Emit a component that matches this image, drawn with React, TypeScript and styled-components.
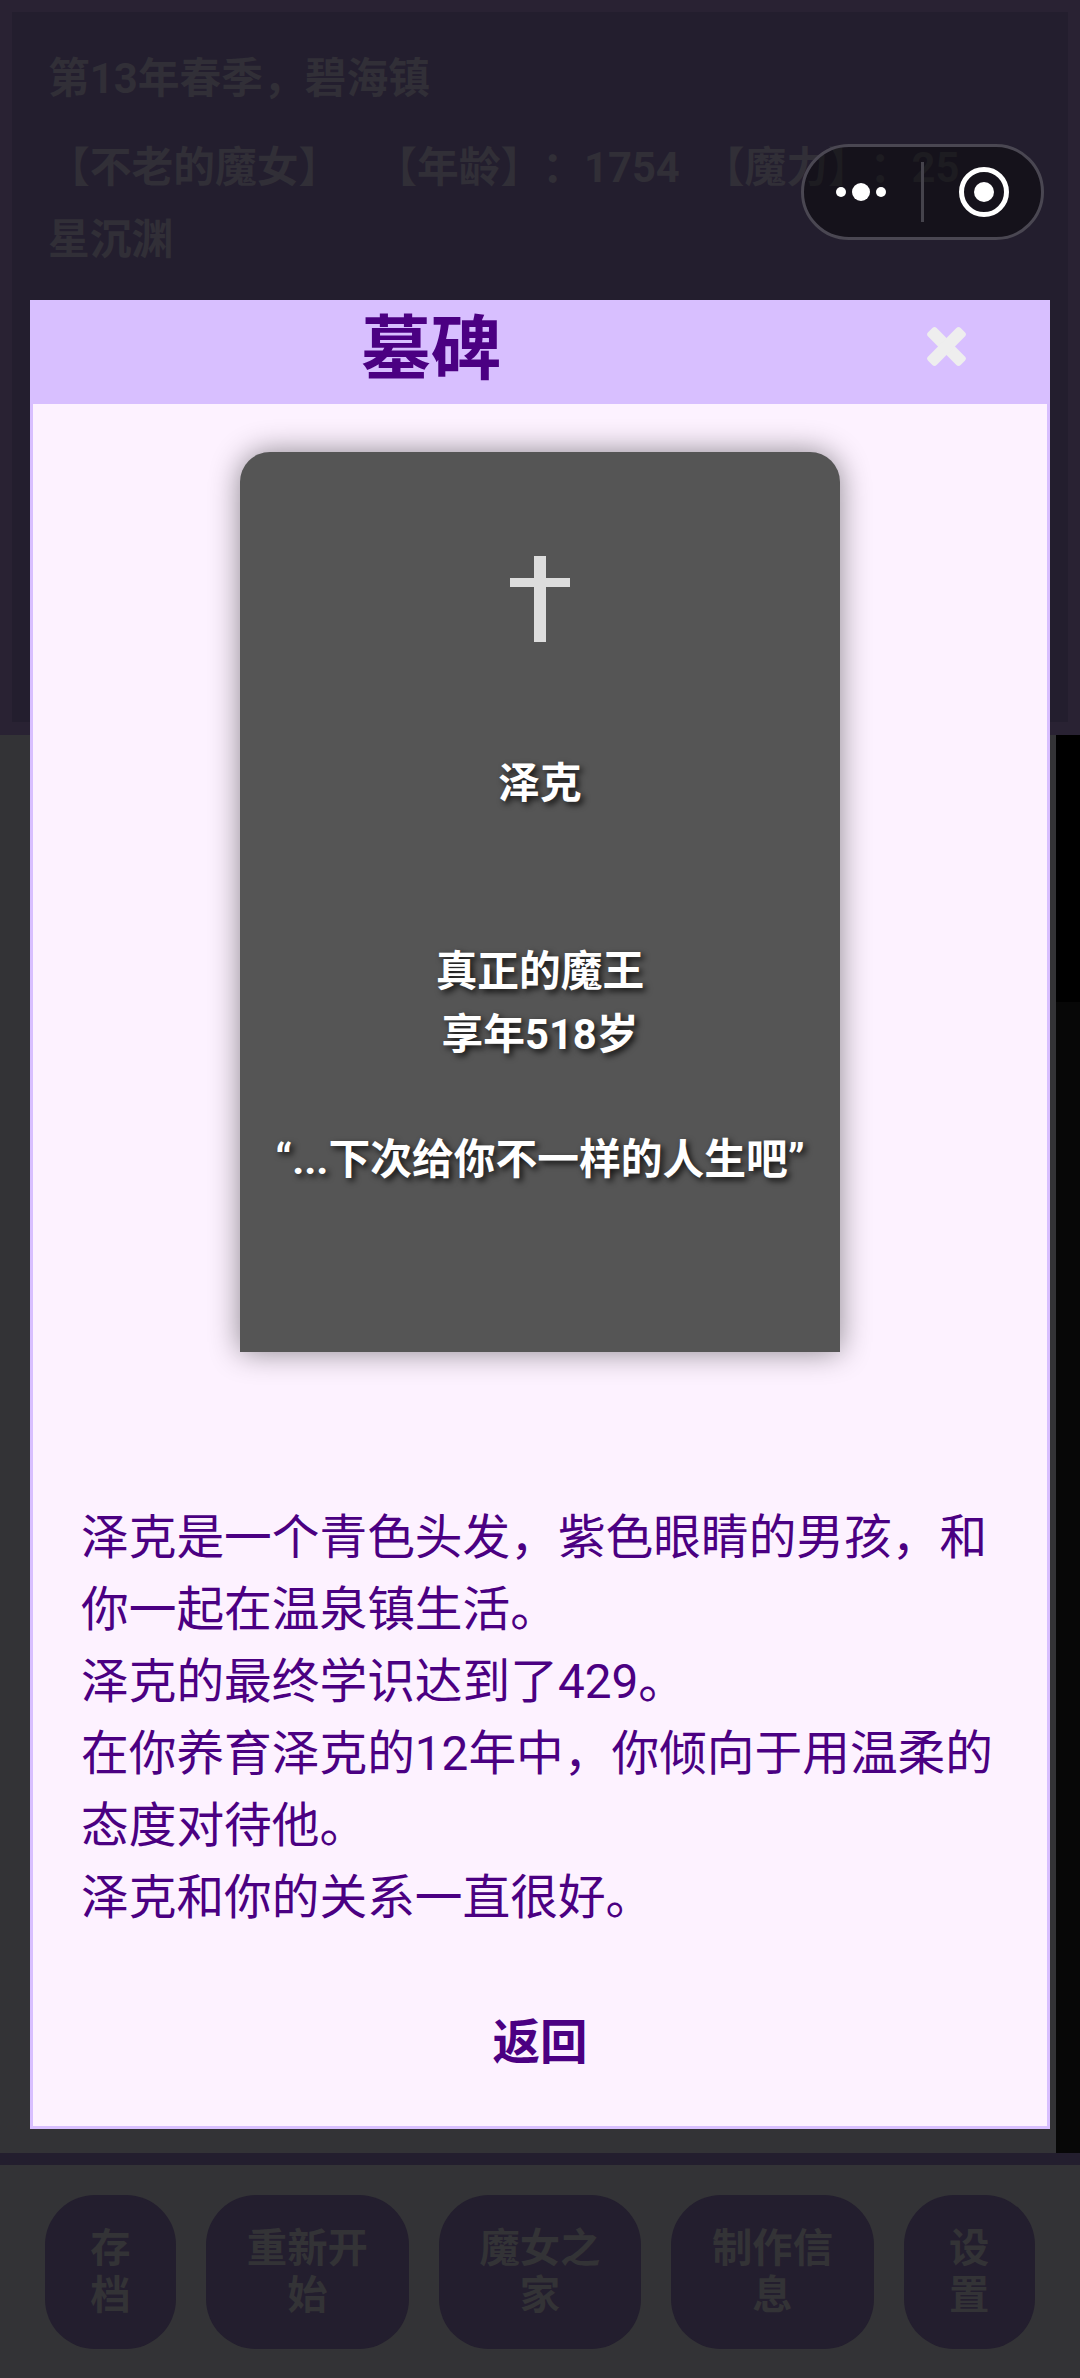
import React from "react";
import styled, { createGlobalStyle } from "styled-components";

const GlobalStyle = createGlobalStyle`
  html, body {
    margin: 0;
    padding: 0;
    background: #333336;
  }
  * {
    box-sizing: border-box;
  }
`;

const Page = styled.div`
  position: relative;
  width: 1080px;
  height: 2378px;
  overflow: hidden;
  display: flex;
  flex-direction: column;
  background: #333336;
  font-family: Roboto, "Noto Sans CJK SC", sans-serif;
  text-spacing-trim: space-all;
`;

const StatusArea = styled.header`
  flex: none;
  height: 735px;
  padding: 12px 12px 13px;
  background: #292233;
`;

const StatusPanel = styled.div`
  height: 100%;
  padding: 31px 36px 0;
  background: #231e2e;
  color: #312f37;
  font-size: 41.76px;
  font-weight: 700;
  line-height: 72px;
`;

const StatusLine = styled.p`
  margin: 0 0 17px;
`;

const Stat = styled.span<{ $gap: number }>`
  display: inline-block;
  margin-right: ${(p) => p.$gap}px;
`;

const Middle = styled.div`
  flex: 1;
  display: flex;
  justify-content: flex-end;
`;

const BlackStrip = styled.div`
  width: 24px;
  background: linear-gradient(#000 267px, #070707 267px);
`;

const Band = styled.div`
  flex: none;
  height: 12px;
  background: #231e2e;
`;

const Footer = styled.nav`
  flex: none;
  height: 213px;
  padding: 30px 0 0 45px;
  display: flex;
  gap: 30px;
  align-items: flex-start;
`;

const FooterButton = styled.div<{ $wide?: boolean }>`
  flex: none;
  width: ${(p) => (p.$wide ? 202.6 : 131)}px;
  height: 154px;
  padding: 0 30px;
  display: flex;
  align-items: center;
  justify-content: center;
  text-align: center;
  border-radius: 50px;
  background: #231e2e;
  color: #333336;
  font-size: 40.32px;
  font-weight: 700;
  line-height: 47px;
`;

const Capsule = styled.div`
  position: absolute;
  top: 144px;
  left: 801px;
  width: 243px;
  height: 96px;
  display: flex;
  align-items: center;
  border: 3px solid #4a4752;
  border-radius: 48px;
  background: rgba(0, 0, 0, 0.4);
`;

const CapsuleIcon = styled.svg`
  flex: none;
  display: block;
`;

const CapsuleDivider = styled.div`
  flex: none;
  width: 3px;
  height: 60px;
  background: #45434c;
`;

const Modal = styled.section`
  position: absolute;
  top: 300px;
  left: 30px;
  width: 1020px;
  height: 1829px;
  display: flex;
  flex-direction: column;
  border: 3px solid #d8bfff;
  background: #fdf2ff;
  color: #4b0082;
`;

const ModalHeader = styled.div`
  flex: none;
  height: 101px;
  padding: 0 80px 0 328px;
  display: flex;
  align-items: center;
  justify-content: space-between;
  background: #d8bfff;
`;

const ModalTitle = styled.h1`
  margin: 0 0 8px;
  font-size: 70px;
  font-weight: 700;
  line-height: 70px;
`;

const CloseIcon = styled.svg`
  display: block;
  margin-bottom: 15px;
`;

const ModalBody = styled.div`
  flex: 1;
  padding: 48px 48px 0;
  display: flex;
  flex-direction: column;
`;

const Tombstone = styled.div`
  flex: none;
  align-self: center;
  width: 600px;
  height: 900px;
  padding-top: 104px;
  display: flex;
  flex-direction: column;
  align-items: center;
  border-radius: 30px 30px 0 0;
  background: #555;
  box-shadow: 0 0 30px rgba(0, 0, 0, 0.45);
`;

const CrossIcon = styled.svg`
  flex: none;
  display: block;
  margin-bottom: 111px;
`;

const Epitaph = styled.div`
  color: #fff;
  font-size: 41.76px;
  font-weight: 700;
  line-height: 62.64px;
  text-align: center;
  white-space: pre-line;
  text-shadow: 3px 3px 6px rgba(0, 0, 0, 0.8);
`;

const Story = styled.p`
  margin: 150px 0 0;
  font-size: 47.7px;
  line-height: 72px;
  white-space: pre-line;
`;

const BackButton = styled.div`
  margin-top: 73px;
  font-size: 47.52px;
  font-weight: 700;
  line-height: 72px;
  text-align: center;
`;

const footerItems = [
  { label: "存档", wide: false },
  { label: "重新开始", wide: true },
  { label: "魔女之家", wide: true },
  { label: "制作信息", wide: true },
  { label: "设置", wide: false },
];

const epitaph = `泽克


真正的魔王
享年518岁

“...下次给你不一样的人生吧”`;

const story = `泽克是一个青色头发，紫色眼睛的男孩，和你一起在温泉镇生活。
泽克的最终学识达到了429。
在你养育泽克的12年中，你倾向于用温柔的态度对待他。
泽克和你的关系一直很好。`;

export default function App() {
  return (
    <Page>
      <GlobalStyle />
      <StatusArea>
        <StatusPanel>
          <StatusLine>第13年春季，碧海镇</StatusLine>
          <div>
            <Stat $gap={35}>【不老的魔女】</Stat>
            <Stat $gap={23}>【年龄】：1754</Stat>
            <Stat $gap={0}>【魔力】：25</Stat>
            <br />
            星沉渊
          </div>
        </StatusPanel>
      </StatusArea>
      <Middle>
        <BlackStrip />
      </Middle>
      <Band />
      <Footer>
        {footerItems.map((item) => (
          <FooterButton key={item.label} $wide={item.wide}>
            {item.label}
          </FooterButton>
        ))}
      </Footer>

      <Capsule>
        <CapsuleIcon width="117" height="90" viewBox="0 0 117 90">
          <circle cx="37" cy="45" r="5" fill="#fff" />
          <circle cx="57" cy="45" r="9" fill="#fff" />
          <circle cx="77" cy="45" r="5" fill="#fff" />
        </CapsuleIcon>
        <CapsuleDivider />
        <CapsuleIcon width="117" height="90" viewBox="0 0 117 90">
          <circle cx="60" cy="45" r="22.5" fill="none" stroke="#fff" strokeWidth="5" />
          <circle cx="60" cy="45" r="10" fill="#fff" />
        </CapsuleIcon>
      </Capsule>

      <Modal>
        <ModalHeader>
          <ModalTitle>墓碑</ModalTitle>
          <CloseIcon width="41" height="41" viewBox="-20.5 -20.5 41 41">
            <rect x="-23" y="-6" width="46" height="12" rx="3" fill="#eee" transform="rotate(45)" />
            <rect x="-23" y="-6" width="46" height="12" rx="3" fill="#eee" transform="rotate(-45)" />
          </CloseIcon>
        </ModalHeader>
        <ModalBody>
          <Tombstone>
            <CrossIcon width="60" height="86" viewBox="0 0 60 86">
              <rect x="24" y="0" width="12" height="86" fill="#ddd" />
              <rect x="0" y="22" width="60" height="9" fill="#ddd" />
            </CrossIcon>
            <Epitaph>{epitaph}</Epitaph>
          </Tombstone>
          <Story>{story}</Story>
          <BackButton>返回</BackButton>
        </ModalBody>
      </Modal>
    </Page>
  );
}
